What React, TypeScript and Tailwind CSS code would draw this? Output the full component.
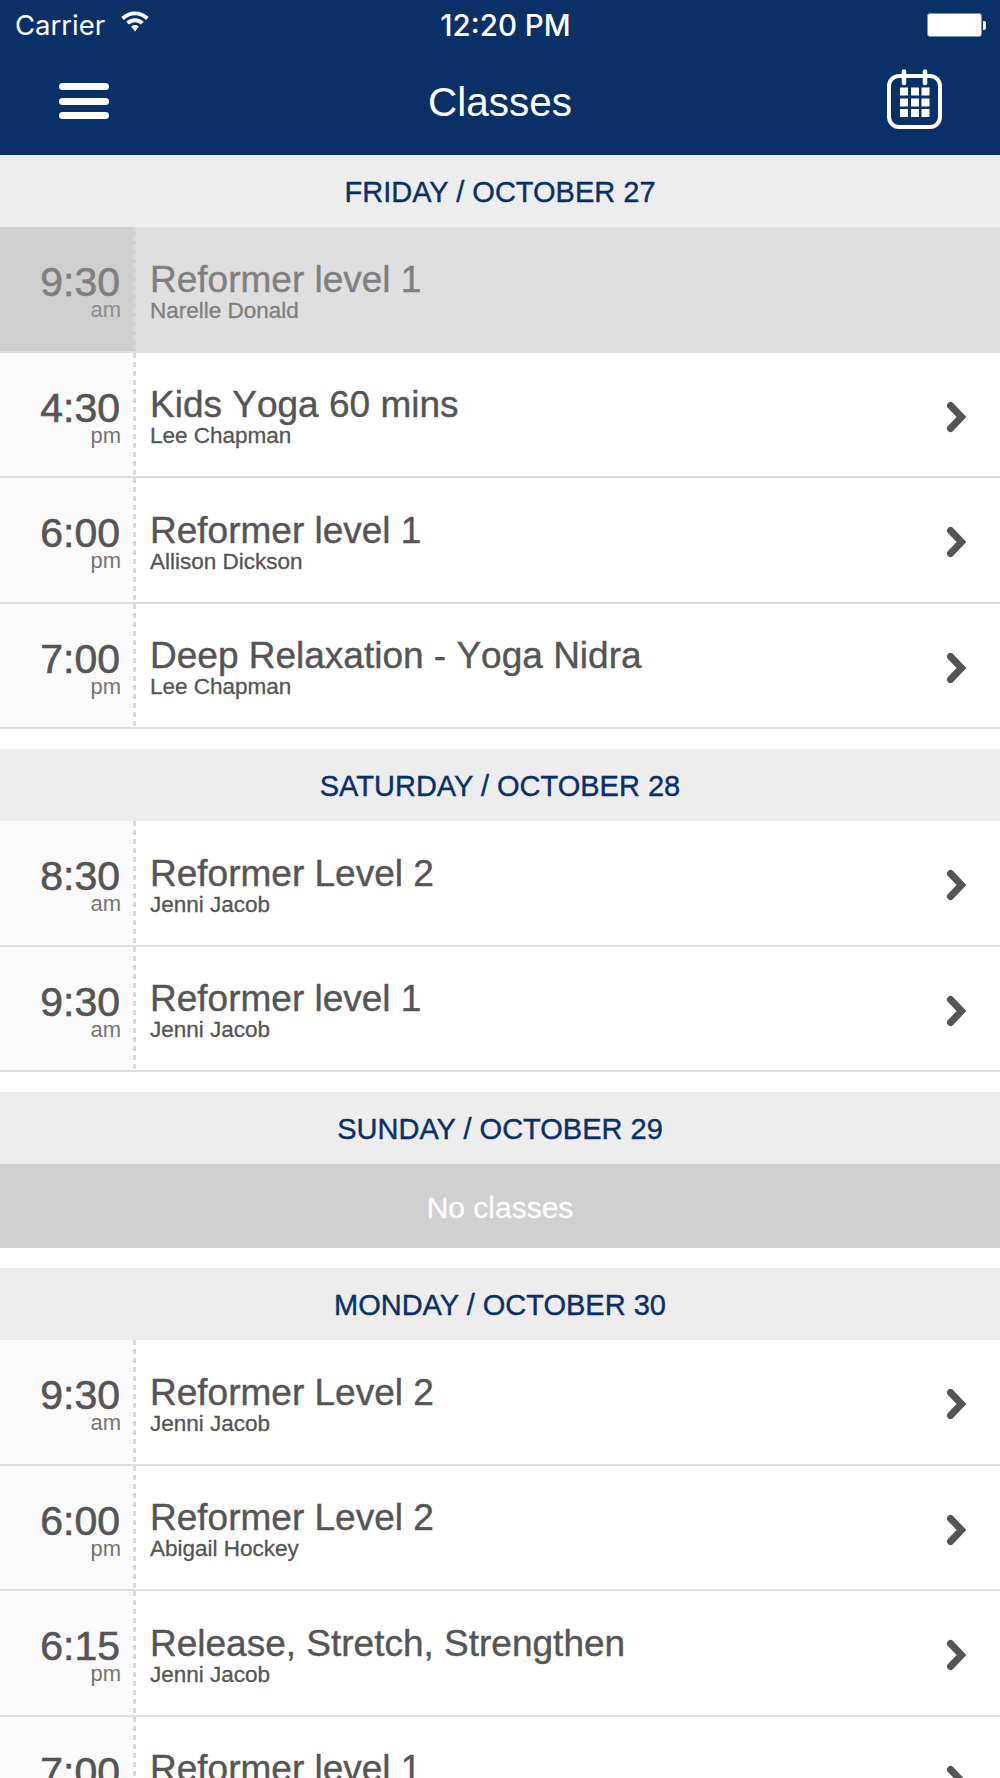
type Item = { t: string; m: string; title: string; who: string; past?: boolean };

function Chevron() {
  return (
    <svg width="24" height="32" viewBox="0 0 24 32" className="mt-[5px] ml-[1px] shrink-0">
      <path d="M4.500 4.500 L15.500 16 L4.500 27.500" fill="none" stroke="#555555" strokeWidth="7" strokeLinecap="round" strokeLinejoin="miter" />
    </svg>
  );
}

function Row({ t, m, title, who, past }: Item) {
  return (
    <div className={`flex h-[125.5px] border-b-2 border-[#e0e0e0] ${past ? "bg-[#dfdfdf] text-[#808080]" : "bg-white text-[#555555]"}`}>
      <div className={`flex w-[133px] shrink-0 flex-col items-end pt-[32px] pr-[13px] ${past ? "bg-[#cfcfcf]" : "bg-[#fafafa]"}`}>
        <div className="text-[41px] leading-[46px] [-webkit-text-stroke:0.6px]">{t}</div>
        <div className="mr-[-1px] mt-[-7px] text-[22px] leading-[24px] opacity-80">{m}</div>
      </div>
      <div className={`w-[3px] shrink-0 ${past ? "bg-[repeating-linear-gradient(to_bottom,#d9d9d9_0,#d9d9d9_5px,#cfcfcf_5px,#cfcfcf_9px)]" : "bg-[repeating-linear-gradient(to_bottom,#dcdcdc_0,#dcdcdc_5px,#ffffff_5px,#ffffff_9px)]"}`} />
      <div className="flex min-w-0 flex-1 items-center">
        <div className="flex-1 pl-[14px] pt-[10px]">
          <div className="mt-[-5px] text-[37px] leading-[40px] [font-kerning:none] [-webkit-text-stroke:0.4px]">{title}</div>
          <div className="mt-[-1px] text-[22.500px] leading-[24px] [-webkit-text-stroke:0.3px]">{who}</div>
        </div>
        {!past && <div className="mr-[30px] flex"><Chevron /></div>}
      </div>
    </div>
  );
}

function Head({ children }: { children: string }) {
  return (
    <div className="flex h-[72px] items-center justify-center bg-[#ededed] pt-[3px] text-[29px] text-[#0b3068] [-webkit-text-stroke:0.4px]">{children}</div>
  );
}

const fri: Item[] = [
  { t: "9:30", m: "am", title: "Reformer level 1", who: "Narelle Donald", past: true },
  { t: "4:30", m: "pm", title: "Kids Yoga 60 mins", who: "Lee Chapman" },
  { t: "6:00", m: "pm", title: "Reformer level 1", who: "Allison Dickson" },
  { t: "7:00", m: "pm", title: "Deep Relaxation - Yoga Nidra", who: "Lee Chapman" },
];
const sat: Item[] = [
  { t: "8:30", m: "am", title: "Reformer Level 2", who: "Jenni Jacob" },
  { t: "9:30", m: "am", title: "Reformer level 1", who: "Jenni Jacob" },
];
const mon: Item[] = [
  { t: "9:30", m: "am", title: "Reformer Level 2", who: "Jenni Jacob" },
  { t: "6:00", m: "pm", title: "Reformer Level 2", who: "Abigail Hockey" },
  { t: "6:15", m: "pm", title: "Release, Stretch, Strengthen", who: "Jenni Jacob" },
  { t: "7:00", m: "pm", title: "Reformer level 1", who: "Jenni Jacob" },
];

export default function App() {
  return (
    <div className="h-[1778px] w-[1000px] overflow-hidden bg-white font-['Liberation_Sans',sans-serif]">
      <div className="h-[155px] bg-[#0b3068] text-white">
        <div className="relative flex h-[50px] items-center pl-[15px] font-['Inter',sans-serif] text-[27.500px]">
          <span className="mt-[1px]">Carrier</span>
          <svg width="30" height="24" viewBox="0 0 30 24" className="ml-[15px] mt-[-6px]" fill="#ffffff">
            <path d="M15 1.500C9.800 1.500 5 3.500 1.300 7l2.600 2.900C6.800 7 10.800 5.300 15 5.300s8.200 1.700 11.100 4.600L28.700 7C25 3.500 20.200 1.500 15 1.500Z" />
            <path d="M15 8.200c-3.300 0-6.400 1.300-8.700 3.500l2.700 2.900c1.600-1.500 3.700-2.400 6-2.400s4.400.900 6 2.400l2.700-2.900c-2.300-2.200-5.400-3.500-8.700-3.500Z" />
            <path d="M15 15c-1.500 0-2.900.600-3.900 1.500L15 21.500l3.900-5C17.900 15.600 16.500 15 15 15Z" />
          </svg>
          <span className="absolute left-0 right-0 top-[10px] pl-[11px] text-center text-[29.500px] leading-[30px] font-medium">12:20 PM</span>
          <div className="absolute left-[927px] top-[13px] flex items-center">
            <div className="h-[24px] w-[55px] rounded-[3px] border border-[#7f95b5] bg-white" />
            <div className="ml-[1px] h-[9px] w-[3px] rounded-r-[2px] bg-white" />
          </div>
        </div>
        <div className="flex h-[105px] items-start justify-between">
          <div className="ml-[59px] mt-[33px] flex w-[50px] flex-col gap-[7.500px]">
            <div className="h-[7px] rounded-full bg-white" />
            <div className="h-[7px] rounded-full bg-white" />
            <div className="h-[7px] rounded-full bg-white" />
          </div>
          <div className="ml-[4px] mt-[30px] text-[40.500px] leading-[44px]">Classes</div>
          <svg width="56" height="60" viewBox="0 0 56 60" className="mr-[57px] mt-[19px]" fill="none">
            <rect x="2" y="7" width="51" height="51" rx="10" stroke="#ffffff" strokeWidth="4" />
            <path d="M17 2.500V14M38 2.500V14" stroke="#ffffff" strokeWidth="4.500" strokeLinecap="round" />
            <g fill="#ffffff">
              <rect x="13" y="18.500" width="8" height="8" />
              <rect x="24" y="18.500" width="8" height="8" />
              <rect x="34.500" y="18.500" width="8" height="8" />
              <rect x="13" y="29.500" width="8" height="8" />
              <rect x="24" y="29.500" width="8" height="8" />
              <rect x="34.500" y="29.500" width="8" height="8" />
              <rect x="13" y="40" width="8" height="8" />
              <rect x="24" y="40" width="8" height="8" />
              <rect x="34.500" y="40" width="8" height="8" />
            </g>
          </svg>
        </div>
      </div>
      <Head>FRIDAY / OCTOBER 27</Head>
      {fri.map((r, i) => <Row key={i} {...r} />)}
      <div className="h-[20px]" />
      <Head>SATURDAY / OCTOBER 28</Head>
      {sat.map((r, i) => <Row key={i} {...r} />)}
      <div className="h-[20px]" />
      <Head>SUNDAY / OCTOBER 29</Head>
      <div className="flex h-[84px] items-center justify-center bg-[#d0d0d0] pt-[2px] text-[30px] text-white [-webkit-text-stroke:0.3px]">No classes</div>
      <div className="h-[20px]" />
      <Head>MONDAY / OCTOBER 30</Head>
      {mon.map((r, i) => <Row key={i} {...r} />)}
    </div>
  );
}
